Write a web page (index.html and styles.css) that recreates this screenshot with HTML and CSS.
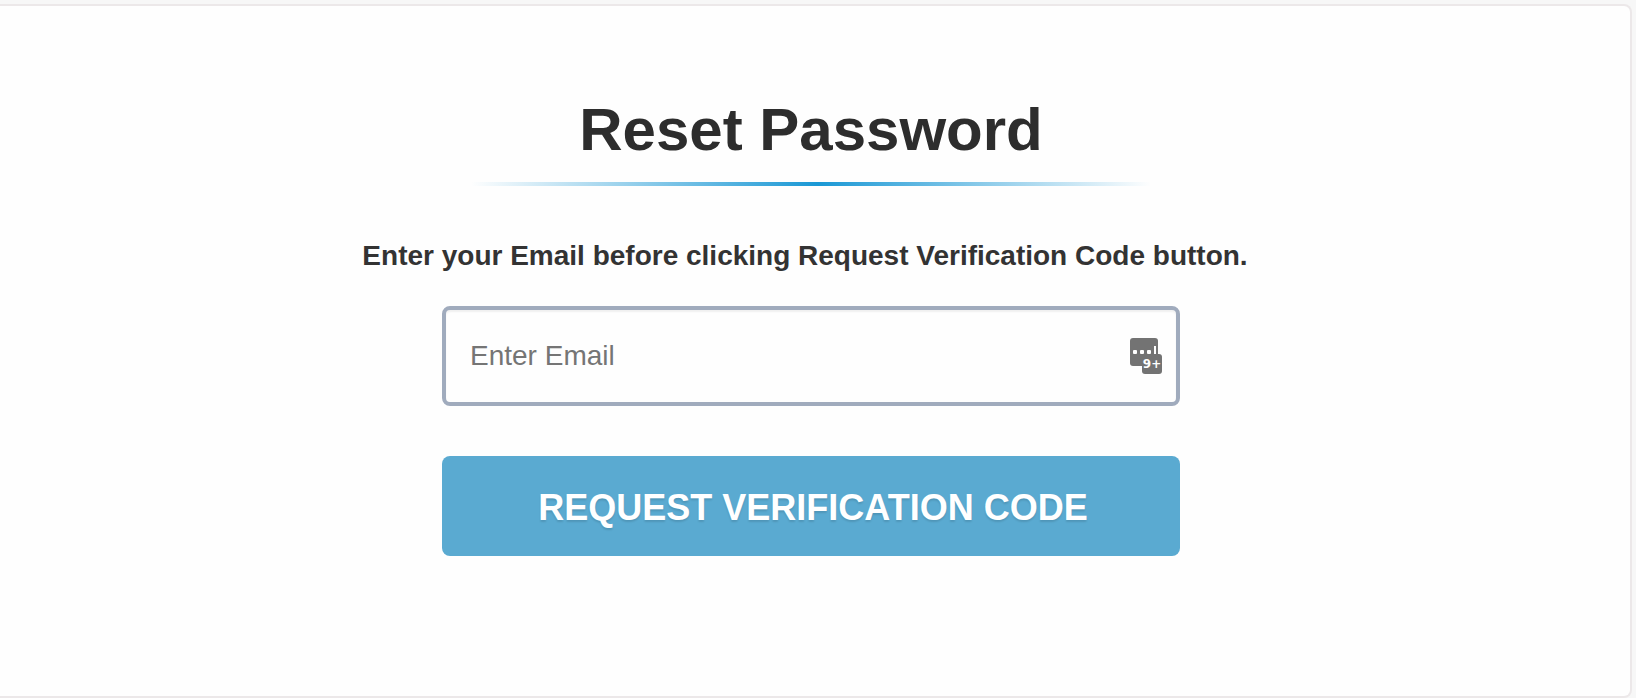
FILE: index.html
```html
<!DOCTYPE html>
<html lang="en">
<head>
  <meta charset="UTF-8" />
  <meta name="viewport" content="width=device-width, initial-scale=1" />
  <title>Reset Password</title>
  <link rel="stylesheet" href="styles.css">
</head>
<body>

  <main class="card">
    <h1>Reset Password</h1>
    <hr class="divider">

    <form class="reset-form" action="#" method="post">
      <label class="hint" for="email">Enter your Email before clicking Request Verification Code button.</label>

      <div class="field">
        <input type="email" id="email" name="email" placeholder="Enter Email" autocomplete="email" />
        <svg class="field-icon" viewBox="0 0 32 36" aria-hidden="true">
          <rect x="0" y="0" width="28" height="28" rx="3" />
          <rect x="12" y="16" width="20" height="20" rx="3" />
          <g class="marks">
            <rect x="3" y="12" width="4" height="4" rx="1" />
            <rect x="10" y="12" width="4" height="4" rx="1" />
            <rect x="17" y="12" width="4" height="4" rx="1" />
            <rect x="24" y="8" width="2" height="8" />
          </g>
          <text x="22" y="30" text-anchor="middle">9+</text>
        </svg>
      </div>

      <button type="submit" class="submit">Request Verification Code</button>
    </form>
  </main>

</body>
</html>
```
FILE: styles.css
```css
*, *::before, *::after {
  box-sizing: border-box;
}

body {
  margin: 0;
  background: #f7f7f7;
  font-family: "Liberation Sans", Arial, Helvetica, sans-serif;
  font-size: 28px;
  line-height: 40px;
  color: #333;
}

/* Card runs off the left side of the window */
.card {
  display: flex;
  flex-direction: column;
  align-items: center;
  margin: 4px 4px 0 0;
  padding: 88px 8px 140px 0;
  background: #fefefe;
  border: 2px solid #ece8e9;
  border-left: none;
  border-radius: 0 8px 8px 0;
}

h1 {
  margin: 0;
  font-size: 60px;
  line-height: 72px;
  color: #2d2d2d;
  text-align: center;
}

.divider {
  width: 100%;
  max-width: 680px;
  height: 4px;
  margin: 16px 0 50px;
  border: none;
  background: linear-gradient(to right, rgba(26, 152, 213, 0), #1a98d5 51%, rgba(26, 152, 213, 0));
}

/* Form */
.reset-form {
  display: flex;
  flex-direction: column;
  align-items: center;
  width: 100%;
}

.hint {
  margin-bottom: 30px;
  padding-right: 12px;
  font-weight: bold;
  text-align: center;
}

.field {
  position: relative;
  width: 100%;
  max-width: 738px;
  margin-bottom: 50px;
}

.field input {
  display: block;
  width: 100%;
  height: 100px;
  padding: 0 72px 0 24px;
  border: 4px solid #a0abbd;
  border-radius: 8px;
  background: #fefefe;
  box-shadow: inset 0 2px 2px rgba(0, 0, 0, 0.06);
  font: inherit;
  color: #333;
}

.field input::placeholder {
  color: #757575;
  opacity: 1;
}

.field-icon {
  position: absolute;
  top: 32px;
  right: 18px;
  width: 32px;
  height: 36px;
  fill: #737373;
}

.field-icon .marks {
  fill: #fff;
}

.field-icon text {
  fill: #fff;
  font-family: "DejaVu Sans", Verdana, sans-serif;
  font-size: 12px;
  font-weight: bold;
}

.submit {
  width: 100%;
  max-width: 738px;
  height: 100px;
  padding: 4px 20px 0 24px;
  border: none;
  border-radius: 8px;
  background: #5aaad1;
  color: #fff;
  font-family: inherit;
  font-size: 36px;
  font-weight: bold;
  text-transform: uppercase;
  text-shadow: 0 2px 2px rgba(0, 0, 0, 0.12);
  cursor: pointer;
}
```
